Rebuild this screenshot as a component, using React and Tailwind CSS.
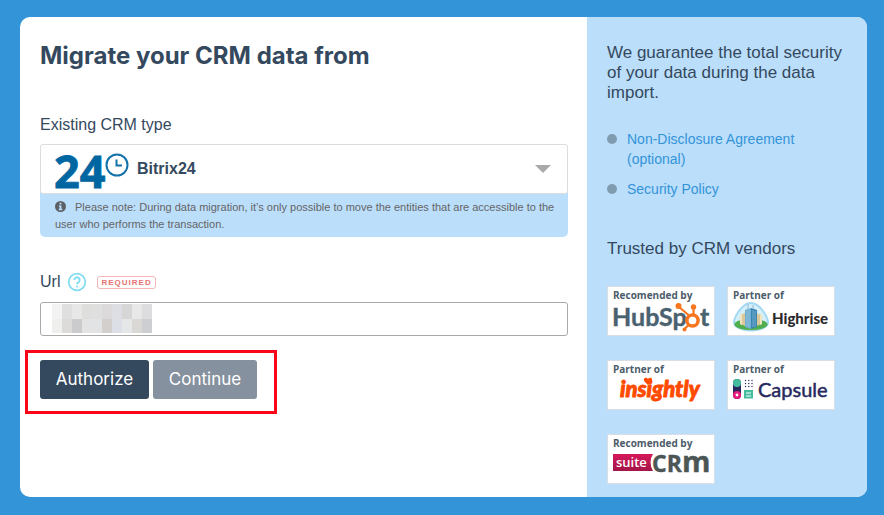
import { useState } from "react";

function BitrixLogo() {
  return (
    <svg className="overflow-visible" width="76" height="40" viewBox="0 0 76 40" aria-hidden="true">
      <text x="0" y="36" fontFamily="Open Sans, Noto Sans, sans-serif" fontWeight="700" fontSize="45" fill="#0066a1" stroke="#0066a1" strokeWidth=".8">
        24
      </text>
      <circle cx="63" cy="13" r="10.5" fill="#fff" stroke="#1273aa" strokeWidth="2" />
      <path d="M62.5 7.5V13.5H68" fill="none" stroke="#1273aa" strokeWidth="2" />
    </svg>
  );
}

function InfoIcon() {
  return (
    <svg className="mr-[9px] inline-block align-[-1px]" width="11" height="11" viewBox="0 0 12 12" aria-hidden="true">
      <circle cx="6" cy="6" r="6" fill="#5c6066" />
      <path d="M5 2h2v1.7H5zM4.2 4.8H7v3.7h.9V10H4.1V8.500H5V6.200H4.200z" fill="#bbdefb" />
    </svg>
  );
}

function HelpIcon() {
  return (
    <svg width="20" height="20" viewBox="0 0 20 20" aria-hidden="true">
      <circle cx="10" cy="10" r="8.300" fill="none" stroke="#7fdcf0" strokeWidth="1.700" />
      <path d="M7.300 8a2.700 2.700 0 1 1 4.300 2.200c-1 .7-1.600 1-1.600 2.100" fill="none" stroke="#7fdcf0" strokeWidth="1.900" />
      <circle cx="10" cy="14.500" r="1.100" fill="#7fdcf0" />
    </svg>
  );
}

function HubSpot() {
  return (
    <svg className="overflow-visible" width="100" height="33" viewBox="0 0 100 33" role="img" aria-label="HubSpot">
      <g fontFamily="Lato, sans-serif" fontWeight="700" fontSize="25" fill="#4a6170" stroke="#4a6170" strokeWidth=".4">
        <text x="-1" y="25">HubSp</text>
        <text x="87" y="25">t</text>
      </g>
      <g fill="none" stroke="#f8761f">
        <circle cx="79.500" cy="19.500" r="5.600" fill="#fff" strokeWidth="3.500" />
        <path d="M75.500 14 66 6M80.500 13.500V6M76 23.500 71.500 28" strokeWidth="2.200" />
      </g>
      <g fill="#f8761f">
        <circle cx="65.500" cy="5" r="3" />
        <circle cx="80.500" cy="6" r="2.700" />
        <circle cx="71.500" cy="28.500" r="2" />
      </g>
    </svg>
  );
}

function Highrise() {
  return (
    <svg className="overflow-visible" width="100" height="33" viewBox="0 0 100 33" role="img" aria-label="Highrise">
      <path d="M18 1c9 0 18 14 18 20.500C36 27 27 30.500 18 30.500S0 27 0 21.500C0 15 9 1 18 1z" fill="#a3d8f2" />
      <path d="M18 3c7.500 0 16 12.500 16 18 0 5-8 7.500-16 7.500S2 26 2 21C2 15.500 10.500 3 18 3z" fill="#d5effa" />
      <ellipse cx="18" cy="23.500" rx="16.500" ry="5.500" fill="#4fae4e" />
      <path d="M7 14l5-2v13l-5-2zM23 12l6 2v9l-6 2z" fill="#d9c99a" />
      <path d="M7 14l2-1v11l-2-1zM27 13l2 1v9l-2 1z" fill="#f0e5c0" />
      <path d="M12 9l6-2v21l-6-2z" fill="#71aed0" />
      <path d="M18 7l6 2v17l-6 2z" fill="#3b85b2" />
      <path d="M15 8V3M20 8V4" stroke="#8dbbd2" strokeWidth="1" />
      <path d="M14 10v16M16 9v17M20 9v17M22 10v16" stroke="#a7d5e9" strokeWidth=".5" />
      <text x="39" y="23" fontFamily="Lato, sans-serif" fontWeight="900" fontSize="15" fill="#2c2a2b">
        Highrise
      </text>
    </svg>
  );
}

function Insightly() {
  return (
    <svg className="overflow-visible" width="100" height="33" viewBox="0 0 100 33" role="img" aria-label="insightly">
      <text x="7" y="22" fontFamily="Lato, sans-serif" fontWeight="900" fontStyle="italic" fontSize="22" fill="#ff4a00" stroke="#ff4a00" strokeWidth=".9" strokeLinejoin="round">
        insightly
      </text>
      <path d="M35 10l-3.500-3.500c-2-3 1.500-5 3.500-2.500 2-2.500 5.500-.5 3.500 2.500z" fill="#ff4a00" />
    </svg>
  );
}

function Capsule() {
  return (
    <svg className="overflow-visible" width="100" height="33" viewBox="0 0 100 33" role="img" aria-label="Capsule">
      <rect y="4" width="8" height="20" rx="4" fill="#27295e" />
      <circle cx="4" cy="8" r="4" fill="#43bd9d" />
      <circle cx="4" cy="20" r="4" fill="#e9187d" />
      <circle cx="4" cy="20" r="1.400" fill="#fff" />
      <g fill="#27295e">
        {[5.5, 8.5, 11.5].map((y) =>
          [12.5, 15.8, 19].map((x) => <circle key={`${x}-${y}`} cx={x} cy={y} r=".7" />)
        )}
      </g>
      <path d="M11 15h9v8.500h-9z" fill="#43bd9d" />
      <path d="M13 18h5M13 21h5" stroke="#fff" />
      <text x="25" y="22" fontFamily="Lato, sans-serif" fontWeight="400" fontSize="20" fill="#27295e" stroke="#27295e" strokeWidth=".5">
        Capsule
      </text>
    </svg>
  );
}

function SuiteCrm() {
  return (
    <svg className="overflow-visible" width="100" height="33" viewBox="0 0 100 33" role="img" aria-label="SuiteCRM">
      <defs>
        <linearGradient id="suite" x1="0" y1="0" x2="0" y2="1">
          <stop offset="0" stopColor="#d6195c" />
          <stop offset="1" stopColor="#a31548" />
        </linearGradient>
      </defs>
      <path d="M0 5h40q-5 8 0 17H0z" fill="url(#suite)" />
      <text x="3" y="18" fontFamily="Open Sans, sans-serif" fontWeight="600" fontSize="13" fill="#fff">
        suite
      </text>
      <g fontFamily="Open Sans, sans-serif" fontWeight="700" fill="#4b5655" stroke="#4b5655" strokeWidth=".4">
        <text x="39" y="23" fontSize="23">CR</text>
        <text x="69" y="23" fontSize="29">m</text>
      </g>
    </svg>
  );
}

const vendors = [
  { label: "Recomended by", Logo: HubSpot },
  { label: "Partner of", Logo: Highrise },
  { label: "Partner of", Logo: Insightly },
  { label: "Partner of", Logo: Capsule },
  { label: "Recomended by", Logo: SuiteCrm },
];

const links = ["Non-Disclosure Agreement (optional)", "Security Policy"];

function HiddenValue() {
  return (
    <div className="pointer-events-none absolute top-[2px] left-3 grid grid-cols-10" aria-hidden="true">
      <i className="h-[15px] w-[10px] bg-[#f3f3f3]" />
      <i className="bg-[#dfdfe0]" />
      <i className="bg-[#e7e7e8]" />
      <i className="bg-[#dededd]" />
      <i className="bg-[#dfdfdf]" />
      <i className="bg-[#dcdadb]" />
      <i className="bg-[#dddee4]" />
      <i className="bg-[#d6d6d6]" />
      <i className="bg-[#e8e8e9]" />
      <i className="bg-[#dddde0]" />
      <i className="h-[14px] w-[10px] bg-[#efefed]" />
      <i className="bg-[#dcdbd9]" />
      <i className="bg-[#cbcbcd]" />
      <i className="bg-[#e3e3e4]" />
      <i className="bg-[#e2e3e5]" />
      <i className="bg-[#d3cfcc]" />
      <i className="bg-[#dddfe6]" />
      <i className="bg-[#e5e6e8]" />
      <i className="bg-[#d9d8d5]" />
      <i className="bg-[#cdced2]" />
    </div>
  );
}

export default function App() {
  const [crm, setCrm] = useState("bitrix24");
  return (
    <div className="min-h-screen bg-[#3394d8] pt-[17px] pr-[17px] pb-[18px] pl-5 font-['Liberation_Sans',Arial,sans-serif] text-[#34495e]">
      <div className="flex overflow-hidden rounded-[10px] bg-white">
        <main className="min-w-0 flex-1 px-5 pt-6">
          <h1 className="font-['Inter',sans-serif] text-[24px] leading-[30px] font-bold">Migrate your CRM data from</h1>

          <form className="mt-11 mr-[-1px]" onSubmit={(e) => e.preventDefault()}>
            <label htmlFor="crm" className="block text-base leading-5">
              Existing CRM type
            </label>
            <div className="mt-[9px] rounded-[5px] bg-[#bbdefb]">
              <div className="relative">
                <select
                  id="crm"
                  value={crm}
                  onChange={(e) => setCrm(e.target.value)}
                  className="block h-[50px] w-full appearance-none rounded-[3px] border border-[#dcdcdc] bg-white pl-24 text-base font-bold text-[#34495e]"
                >
                  <option value="bitrix24">Bitrix24</option>
                </select>
                <span className="pointer-events-none absolute top-2 left-[14px]">
                  <BitrixLogo />
                </span>
                <svg className="pointer-events-none absolute top-[21px] right-[17px]" width="16" height="8" viewBox="0 0 16 8" aria-hidden="true">
                  <path d="M0 0h16L8 8z" fill="#a9a9a9" />
                </svg>
              </div>
              <p className="pt-[5px] pr-2 pb-1 pl-[15px] text-[11px] leading-[17px] text-[#656565]">
                <InfoIcon />
                Please note: During data migration, it’s only possible to move the entities that are accessible to the user who performs the transaction.
              </p>
            </div>

            <div className="mt-[35px] flex items-center">
              <label htmlFor="url" className="text-base leading-5">
                Url
              </label>
              <button type="button" aria-label="Help" className="ml-[7px]">
                <HelpIcon />
              </button>
              <span className="ml-[10px] rounded-[3px] border border-[#f4b6b6] px-[3px] text-[8px] leading-[11px] font-bold tracking-[1px] text-[#e57373]">
                REQUIRED
              </span>
            </div>
            <div className="relative mt-[10px]">
              <input id="url" type="text" className="block h-[34px] w-full rounded-[3px] border border-[#a9a9a9] bg-white px-3 text-base" />
              <HiddenValue />
            </div>

            <div className="relative mt-6 flex w-fit gap-1 font-['Inter',sans-serif] text-[17px] text-white">
              <button type="submit" className="h-[39px] w-[109px] rounded-[3px] bg-[#34495e]">
                Authorize
              </button>
              <button type="button" className="h-[39px] w-[104px] rounded-[3px] bg-[#85919e]">
                Continue
              </button>
              <div className="pointer-events-none absolute -top-[10px] -right-5 -bottom-[15px] -left-[15px] border-[3px] border-[#fb0519]" />
            </div>
          </form>
        </main>

        <aside className="w-[280px] shrink-0 bg-[#bbdefb] pt-[26px] pr-4 pb-[13px] pl-5">
          <h2 className="text-[17px] leading-5">We guarantee the total security of your data during the data import.</h2>
          <ul className="mt-[26px] flex flex-col gap-[10px] text-sm leading-5">
            {links.map((text) => (
              <li key={text} className="flex gap-[10px] pr-6">
                <span className="mt-[5px] size-[10px] shrink-0 rounded-full bg-[#7f9cae]" />
                <a href="#" className="text-[#3394d8]">
                  {text}
                </a>
              </li>
            ))}
          </ul>
          <h2 className="mt-10 text-[17px] leading-5">Trusted by CRM vendors</h2>
          <div className="mt-[27px] grid w-fit grid-cols-2 gap-x-3 gap-y-6">
            {vendors.map(({ label, Logo }, i) => (
              <div key={i} className="flex h-[50px] w-[108px] flex-col border border-[#d8dee3] bg-white pl-[5px]">
                <span className="pt-[2px] font-['Open_Sans',sans-serif] text-[10px] leading-3 font-bold text-[#4c5c6a]">{label}</span>
                <Logo />
              </div>
            ))}
          </div>
        </aside>
      </div>
    </div>
  );
}
